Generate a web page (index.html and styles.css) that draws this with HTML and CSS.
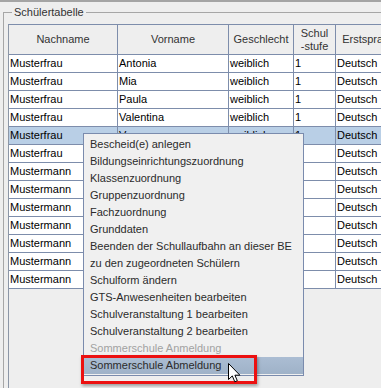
FILE: index.html
```html
<!DOCTYPE html>
<html lang="de">
<head>
<meta charset="utf-8">
<title>Schülertabelle</title>
<link rel="stylesheet" href="styles.css">
</head>
<body>
<div class="topbar"></div>
<fieldset class="group">
  <legend>Schülertabelle</legend>
  <div class="scroll">
    <div class="row thead">
      <div class="c c1">Nachname</div>
      <div class="c c2">Vorname</div>
      <div class="c c3">Geschlecht</div>
      <div class="c c4">Schul<br>-stufe</div>
      <div class="c c5">Erstsprache</div>
    </div>
    <div class="row"><div class="c c1">Musterfrau</div><div class="c c2">Antonia</div><div class="c c3">weiblich</div><div class="c c4">1</div><div class="c c5">Deutsch</div></div>
    <div class="row"><div class="c c1">Musterfrau</div><div class="c c2">Mia</div><div class="c c3">weiblich</div><div class="c c4">1</div><div class="c c5">Deutsch</div></div>
    <div class="row"><div class="c c1">Musterfrau</div><div class="c c2">Paula</div><div class="c c3">weiblich</div><div class="c c4">1</div><div class="c c5">Deutsch</div></div>
    <div class="row"><div class="c c1">Musterfrau</div><div class="c c2">Valentina</div><div class="c c3">weiblich</div><div class="c c4">1</div><div class="c c5">Deutsch</div></div>
    <div class="row selected"><div class="c c1">Musterfrau</div><div class="c c2">V</div><div class="c c3">weiblich</div><div class="c c4">1</div><div class="c c5">Deutsch</div></div>
    <div class="row"><div class="c c1">Musterfrau</div><div class="c c2"></div><div class="c c3"></div><div class="c c4"></div><div class="c c5">Deutsch</div></div>
    <div class="row"><div class="c c1">Mustermann</div><div class="c c2"></div><div class="c c3"></div><div class="c c4"></div><div class="c c5">Deutsch</div></div>
    <div class="row"><div class="c c1">Mustermann</div><div class="c c2"></div><div class="c c3"></div><div class="c c4"></div><div class="c c5">Deutsch</div></div>
    <div class="row"><div class="c c1">Mustermann</div><div class="c c2"></div><div class="c c3"></div><div class="c c4"></div><div class="c c5">Deutsch</div></div>
    <div class="row"><div class="c c1">Mustermann</div><div class="c c2"></div><div class="c c3"></div><div class="c c4"></div><div class="c c5">Deutsch</div></div>
    <div class="row"><div class="c c1">Mustermann</div><div class="c c2"></div><div class="c c3"></div><div class="c c4"></div><div class="c c5">Deutsch</div></div>
    <div class="row"><div class="c c1">Mustermann</div><div class="c c2"></div><div class="c c3"></div><div class="c c4"></div><div class="c c5">Deutsch</div></div>
    <div class="row"><div class="c c1">Mustermann</div><div class="c c2"></div><div class="c c3"></div><div class="c c4"></div><div class="c c5">Deutsch</div></div>
  </div>
</fieldset>

<div class="menu">
  <div class="item">Bescheid(e) anlegen</div>
  <div class="item">Bildungseinrichtungszuordnung</div>
  <div class="item">Klassenzuordnung</div>
  <div class="item">Gruppenzuordnung</div>
  <div class="item">Fachzuordnung</div>
  <div class="item">Grunddaten</div>
  <div class="item">Beenden der Schullaufbahn an dieser BE</div>
  <div class="item">zu den zugeordneten Schülern</div>
  <div class="item">Schulform ändern</div>
  <div class="item">GTS-Anwesenheiten bearbeiten</div>
  <div class="item">Schulveranstaltung 1 bearbeiten</div>
  <div class="item">Schulveranstaltung 2 bearbeiten</div>
  <div class="item disabled">Sommerschule Anmeldung</div>
  <div class="item active">Sommerschule Abmeldung</div>
</div>

<div class="mark"></div>

<svg class="cursor" width="13" height="20" viewBox="0 0 13 20">
  <path d="M0.5 0.5 V16.5 L4.3 12.9 L6.8 18.8 L9.3 17.7 L6.9 12.2 H11.9 Z" fill="#fff" stroke="#000" stroke-width="1" stroke-linejoin="miter"/>
</svg>
</body>
</html>
```

FILE: styles.css
```css
html, body {
  margin: 0;
  padding: 0;
}
body {
  width: 381px;
  height: 388px;
  overflow: hidden;
  position: relative;
  background: #eeeeee;
  font-family: "Liberation Sans", Arial, sans-serif;
  font-size: 11px;
  color: #000;
}
.topbar {
  height: 2px;
  background: #a4a4a4;
}
.group {
  box-sizing: border-box;
  height: 382px;
  margin: 4px 0 0 3px;
  padding: 5px 0 0 4px;
  border: 1px solid #a6a6a6;
  border-right: none;
  border-bottom: none;
  min-width: 0;
}
.group legend {
  margin-left: 4px;
  padding: 0 2px;
  line-height: 13px;
  color: #333;
}
.scroll {
  box-sizing: border-box;
  height: 364px;
  border-top: 1px solid #7d8dab;
  border-left: 1px solid #8c96a6;
  overflow: hidden;
}
.row {
  display: flex;
  width: max-content;
  border-bottom: 1px solid #7d8dab;
}
.c {
  flex: none;
  box-sizing: border-box;
  height: 17px;
  line-height: 17px;
  padding-left: 1px;
  border-right: 1px solid #7d8dab;
  white-space: nowrap;
  overflow: hidden;
}
.c1 { width: 109px; }
.c2 { width: 111px; }
.c3 { width: 65px; }
.c4 { width: 42px; }
.c5 { width: 72px; }
.thead .c {
  height: 29px;
  line-height: 13px;
  padding: 0;
  display: flex;
  align-items: center;
  justify-content: center;
  text-align: center;
  color: #333;
  background: #eeeeee;
}
.row:not(.thead) {
  background: #fff;
}
.row.selected {
  background: #b9cfe6;
}
.menu {
  position: absolute;
  left: 83px;
  top: 133px;
  width: 221px;
  box-sizing: border-box;
  padding: 2px 0 1px;
  border: 1px solid #7a8bad;
  background: #f0f0f0;
  color: #2b2b2b;
}
.item {
  height: 17px;
  line-height: 17px;
  padding-left: 6px;
  white-space: nowrap;
}
.item.disabled {
  color: #a2a2a2;
}
.item.active {
  background: linear-gradient(#abbdd3, #9fb2c8);
}
.mark {
  position: absolute;
  left: 81px;
  top: 355px;
  width: 176px;
  height: 29px;
  box-sizing: border-box;
  border: 3px solid #ec1010;
  box-shadow: 1px 2px 3px rgba(0, 0, 0, 0.35);
}
.cursor {
  position: absolute;
  left: 228px;
  top: 363px;
}
```
